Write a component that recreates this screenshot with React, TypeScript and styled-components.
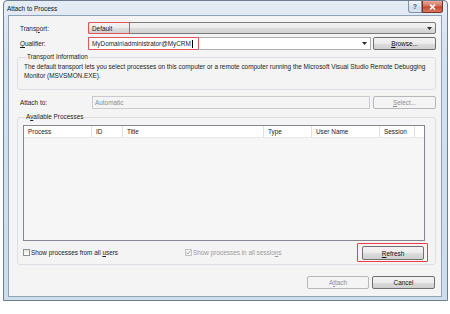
import React from "react";
import styled, { createGlobalStyle } from "styled-components";

const GlobalStyle = createGlobalStyle`
  html, body {
    margin: 0;
    padding: 0;
    background: #ffffff;
  }
  body {
    font-family: "Liberation Sans", Arial, sans-serif;
    font-size: 6.4px;
    color: #1b1b1b;
  }
`;

const Window = styled.div`
  margin-left: 3px;
  width: 445px;
  height: 301px;
  box-sizing: border-box;
  border: 1px solid #6d7c8e;
  border-radius: 4px 4px 0 0;
  background: linear-gradient(#e4ecf6, #d3e0ef 20%, #cfdcec);
  display: flex;
  flex-direction: column;
`;

const TitleBar = styled.div`
  height: 14px;
  display: flex;
  align-items: center;
  padding-left: 3px;
`;

const Title = styled.span`
  color: #111;
`;

const Caption = styled.div`
  display: flex;
  align-self: flex-start;
  margin-left: auto;
  margin-right: 4px;
`;

const CaptionButton = styled.div<{ $close?: boolean }>`
  width: ${p => (p.$close ? "21px" : "14px")};
  height: 12px;
  box-sizing: border-box;
  display: flex;
  align-items: center;
  justify-content: center;
  border: 1px solid ${p => (p.$close ? "#7a3326" : "#8192a8")};
  border-top: none;
  border-radius: ${p => (p.$close ? "0 0 3px 0" : "0 0 0 3px")};
  background: ${p =>
    p.$close
      ? "linear-gradient(#e9a99a, #d4705d 45%, #c2472f 55%, #d87a5e)"
      : "linear-gradient(#f3f6fa, #dde5ef 50%, #cfd9e6 51%, #dbe3ee)"};
  color: #40536b;
  font-size: 7px;
  font-weight: bold;
`;

const Client = styled.div`
  flex: 1;
  margin: 0 5px 3px 4px;
  border: 1px solid #8ea2b9;
  background: #f4f4f4;
  padding: 6px 5px 0 8px;
  display: flex;
  flex-direction: column;
`;

const FieldRow = styled.div<{ $top?: number; $h?: number }>`
  display: flex;
  align-items: center;
  height: ${p => p.$h ?? 13}px;
  margin-top: ${p => p.$top ?? 0}px;
  padding-left: 3px;
`;

const Label = styled.span<{ $w: number }>`
  width: ${p => p.$w}px;
  flex: none;
`;

const Combo = styled.div`
  flex: 1;
  height: 100%;
  box-sizing: border-box;
  border: 1px solid #7a7a7a;
  border-radius: 2px;
  background: linear-gradient(#f3f3f3, #ebebeb 50%, #dddddd 51%, #d1d1d1);
  display: flex;
  align-items: center;
  padding-right: 3px;
`;

const TextField = styled.div<{ $disabled?: boolean }>`
  flex: 1;
  height: 100%;
  box-sizing: border-box;
  border: 1px solid ${p => (p.$disabled ? "#c9cbce" : "#abadb3")};
  background: ${p => (p.$disabled ? "#f4f4f4" : "#ffffff")};
  color: ${p => (p.$disabled ? "#8d8d8d" : "inherit")};
  display: flex;
  align-items: center;
  padding: 0 3px 0 ${p => (p.$disabled ? "2px" : "0")};
`;

const Highlight = styled.span<{ $w: number }>`
  width: ${p => p.$w}px;
  height: calc(100% + 2px);
  margin: -1px 0 -1px -1px;
  box-sizing: border-box;
  border: 1px solid #e2535c;
  border-radius: 1px;
  display: flex;
  align-items: center;
  padding-left: 3px;
`;

const Caret = styled.span`
  width: 1px;
  height: 8px;
  background: #000;
  margin-left: 1px;
`;

const Arrow = styled.svg`
  margin-left: auto;
  flex: none;
`;

const Button = styled.div<{ $w?: number; $h?: number; $disabled?: boolean }>`
  width: ${p => p.$w ?? 63}px;
  height: ${p => p.$h ?? 13}px;
  box-sizing: border-box;
  flex: none;
  border: 1px solid ${p => (p.$disabled ? "#b5b9bd" : "#707070")};
  border-radius: 2px;
  background: ${p =>
    p.$disabled
      ? "#f4f4f4"
      : "linear-gradient(#f3f3f3, #ebebeb 50%, #dddddd 51%, #cfcfcf)"};
  color: ${p => (p.$disabled ? "#8f8f8f" : "#111")};
  display: flex;
  align-items: center;
  justify-content: center;
`;

const Group = styled.fieldset<{ $top: number; $pad: string }>`
  margin: ${p => p.$top}px 0 0 0;
  min-width: 0;
  border: 1px solid #d9dfe4;
  border-radius: 3px;
  padding: ${p => p.$pad};
`;

const Legend = styled.legend`
  margin-left: 2px;
  padding: 0 1px;
  line-height: 8px;
  color: #1b1b1b;
`;

const InfoText = styled.div`
  line-height: 9px;
`;

const ListView = styled.div`
  height: 116px;
  box-sizing: border-box;
  margin-right: 3px;
  border: 1px solid #828790;
  background: #f6f6f6;
`;

const Header = styled.div`
  display: grid;
  grid-template-columns: 68px 31px 141px 48px 68px 35px 1fr;
  height: 11px;
  background: #ffffff;
  border-bottom: 1px solid #e8e8e8;
`;

const HeaderCell = styled.div<{ $last?: boolean }>`
  padding-left: 4px;
  display: flex;
  align-items: center;
  border-right: ${p => (p.$last ? "none" : "1px solid #e1e1e1")};
`;

const OptionsRow = styled.div`
  display: grid;
  grid-template-columns: 162px 1fr auto;
  align-items: center;
  height: 19px;
  margin-top: 2px;
`;

const Check = styled.label<{ $disabled?: boolean }>`
  display: flex;
  align-items: center;
  white-space: pre;
  color: ${p => (p.$disabled ? "#9a9a9a" : "inherit")};
`;

const Box = styled.span<{ $disabled?: boolean }>`
  width: 7px;
  height: 7px;
  box-sizing: border-box;
  border: 1px solid ${p => (p.$disabled ? "#c4c4c4" : "#8e8f8f")};
  background: ${p => (p.$disabled ? "#f4f4f4" : "linear-gradient(#e6e6e6, #ffffff)")};
  margin-right: 1px;
  display: flex;
  align-items: center;
  justify-content: center;
`;

const RefreshMark = styled.div`
  box-sizing: border-box;
  width: 71px;
  height: 19px;
  border: 1px solid #f03c48;
  border-radius: 1px;
  background: #f7f2f2;
  display: flex;
  align-items: center;
  padding: 1px 3px 0 4px;
`;

const Footer = styled.div`
  display: flex;
  justify-content: flex-end;
  gap: 3px;
  margin-top: 11px;
  padding-right: 1px;
`;

const columns = ["Process", "ID", "Title", "Type", "User Name", "Session", ""];

function DownArrow() {
  return (
    <Arrow width="5" height="3" viewBox="0 0 5 3">
      <path d="M0 0h5L2.5 3z" fill="#2b2b2b" />
    </Arrow>
  );
}

export default function App() {
  return (
    <>
      <GlobalStyle />
      <Window>
        <TitleBar>
          <Title>Attach to Process</Title>
          <Caption>
            <CaptionButton>?</CaptionButton>
            <CaptionButton $close>
              <svg width="7" height="6" viewBox="0 0 7 6">
                <path d="M1 0.5l5 5M6 0.5l-5 5" stroke="#ffffff" strokeWidth="1.6" />
              </svg>
            </CaptionButton>
          </Caption>
        </TitleBar>
        <Client>
          <FieldRow $h={12}>
            <Label $w={68}>
              Trans<u>p</u>ort:
            </Label>
            <Combo>
              <Highlight $w={42}>Default</Highlight>
              <DownArrow />
            </Combo>
          </FieldRow>
          <FieldRow $top={3}>
            <Label $w={68}>
              <u>Q</u>ualifier:
            </Label>
            <TextField>
              <Highlight $w={111}>
                MyDomain\administrator@MyCRM
                <Caret />
              </Highlight>
              <DownArrow />
            </TextField>
            <Button style={{ marginLeft: 2 }}>
              <u>B</u>rowse...
            </Button>
          </FieldRow>
          <Group $top={3} $pad="1px 6px 9px 6px">
            <Legend>Transport Information</Legend>
            <InfoText>
              The default transport lets you select processes on this computer or a remote
              computer running the Microsoft Visual Studio Remote Debugging
              <br />
              Monitor (MSVSMON.EXE).
            </InfoText>
          </Group>
          <FieldRow $top={6}>
            <Label $w={72}>Attach to:</Label>
            <TextField $disabled>Automatic</TextField>
            <Button $disabled style={{ marginLeft: 3 }}>
              <u>S</u>elect...
            </Button>
          </FieldRow>
          <Group $top={4} $pad="4px 7px 2px 5px">
            <Legend>
              A<u>v</u>ailable Processes
            </Legend>
            <ListView>
              <Header>
                {columns.map((c, i) => (
                  <HeaderCell key={i} $last={i >= columns.length - 1}>
                    {c}
                  </HeaderCell>
                ))}
              </Header>
            </ListView>
            <OptionsRow>
              <Check>
                <Box />
                {"Show processes from all "}
                <u>u</u>
                {"sers"}
              </Check>
              <Check $disabled>
                <Box $disabled>
                  <svg width="5" height="5" viewBox="0 0 5 5">
                    <path d="M0.5 2.5l1.4 1.6L4.6 0.6" stroke="#a0a0a0" strokeWidth="0.9" fill="none" />
                  </svg>
                </Box>
                {"Show processes in all sessio"}
                <u>n</u>
                {"s"}
              </Check>
              <RefreshMark>
                <Button $w={62} $h={14}>
                  <u>R</u>efresh
                </Button>
              </RefreshMark>
            </OptionsRow>
          </Group>
          <Footer>
            <Button $w={62} $disabled>
              A<u>t</u>tach
            </Button>
            <Button>Cancel</Button>
          </Footer>
        </Client>
      </Window>
    </>
  );
}
